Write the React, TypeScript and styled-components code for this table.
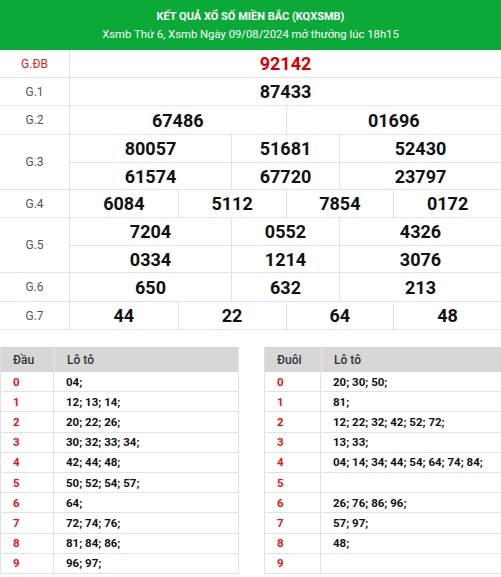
import React from "react";
import styled, { createGlobalStyle } from "styled-components";

const GlobalStyle = createGlobalStyle`
  html, body { margin: 0; padding: 0; background: #fff; }
  body { font-family: Roboto, "Noto Sans", Arial, sans-serif; overflow: hidden; }
  * { box-sizing: border-box; }
`;

const Page = styled.div`
  width: 501px;
`;

const Header = styled.div`
  background: #0aa938;
  height: 50px;
  color: #fff;
  display: flex;
  flex-direction: column;
  align-items: center;
  justify-content: center;
  gap: 3px;
`;

const Title = styled.div`
  font-weight: 700;
  font-size: 11px;
  line-height: 15px;
`;

const SubTitle = styled.div`
  font-size: 11.3px;
  line-height: 15px;
`;

const ResultTable = styled.div`
  display: flex;
  flex-direction: column;
`;

const PrizeRow = styled.div`
  display: grid;
  grid-template-columns: 70px 1fr;
  border-bottom: 1px solid #e2e2e2;
`;

const Label = styled.div<{ $special?: boolean }>`
  display: flex;
  align-items: center;
  justify-content: center;
  border-right: 1px solid #e2e2e2;
  font-size: 12px;
  color: ${(p) => (p.$special ? "#d22" : "#555")};
`;

const Lines = styled.div`
  display: flex;
  flex-direction: column;
`;

const Line = styled.div<{ $cols: string; $h: number }>`
  display: grid;
  grid-template-columns: ${(p) => p.$cols};
  height: ${(p) => p.$h}px;
  & + & { border-top: 1px solid #e2e2e2; }
`;

const Num = styled.div<{ $special?: boolean }>`
  display: flex;
  align-items: center;
  justify-content: center;
  font-weight: 700;
  font-size: 18px;
  color: ${(p) => (p.$special ? "#d80000" : "#111")};
  & + & { border-left: 1px solid #e2e2e2; }
`;

const LotoArea = styled.div`
  display: flex;
  gap: 25px;
  margin-top: 17px;
`;

const LotoTable = styled.div<{ $first: number; $w: string }>`
  width: ${(p) => p.$w};
  flex-shrink: 0;
  display: grid;
  grid-template-columns: ${(p) => p.$first}px 1fr;
  grid-auto-rows: 20.2px;
  grid-template-rows: 25px;
  border-right: 1px solid #e2e2e2;
  border-left: 1px solid #e2e2e2;
  font-size: 11.5px;
`;

const HeadCell = styled.div`
  background: #d7d7d7;
  color: #333;
  font-weight: 500;
  font-size: 12px;
  display: flex;
  align-items: center;
  padding-left: 12px;
  & + & { border-left: 1px solid #e8e8e8; }
`;

const KeyCell = styled.div`
  color: #f01010;
  font-weight: 700;
  display: flex;
  align-items: center;
  padding-left: 12px;
  border-right: 1px solid #e2e2e2;
  border-bottom: 1px solid #e2e2e2;
`;

const ValCell = styled.div`
  color: #111;
  font-weight: 700;
  display: flex;
  align-items: center;
  padding-left: 12px;
  border-bottom: 1px solid #e2e2e2;
`;

const TWO = "1fr 1fr";
const THREE = "161px 108px 1fr";
const FOUR = "repeat(4, 1fr)";

type Prize = { label: string; cols: string; lines: string[][]; special?: boolean; h?: number };

const prizes: Prize[] = [
  { label: "G.ĐB", cols: "1fr", lines: [["92142"]], special: true },
  { label: "G.1", cols: "1fr", lines: [["87433"]] },
  { label: "G.2", cols: TWO, lines: [["67486", "01696"]], h: 28 },
  { label: "G.3", cols: THREE, lines: [["80057", "51681", "52430"], ["61574", "67720", "23797"]] },
  { label: "G.4", cols: FOUR, lines: [["6084", "5112", "7854", "0172"]] },
  { label: "G.5", cols: THREE, lines: [["7204", "0552", "4326"], ["0334", "1214", "3076"]] },
  { label: "G.6", cols: THREE, lines: [["650", "632", "213"]], h: 28 },
  { label: "G.7", cols: FOUR, lines: [["44", "22", "64", "48"]] },
];

const dau = ["04;", "12; 13; 14;", "20; 22; 26;", "30; 32; 33; 34;", "42; 44; 48;", "50; 52; 54; 57;", "64;", "72; 74; 76;", "81; 84; 86;", "96; 97;"];
const duoi = ["20; 30; 50;", "81;", "12; 22; 32; 42; 52; 72;", "13; 33;", "04; 14; 34; 44; 54; 64; 74; 84;", "", "26; 76; 86; 96;", "57; 97;", "48;", ""];

function Loto({ head, first, w, rows }: { head: string; first: number; w: string; rows: string[] }) {
  return (
    <LotoTable $first={first} $w={w}>
      <HeadCell>{head}</HeadCell>
      <HeadCell>Lô tô</HeadCell>
      {rows.map((r, i) => (
        <React.Fragment key={i}>
          <KeyCell>{i}</KeyCell>
          <ValCell>{r}</ValCell>
        </React.Fragment>
      ))}
    </LotoTable>
  );
}

export default function App() {
  return (
    <Page>
      <GlobalStyle />
      <Header>
        <Title>KẾT QUẢ XỔ SỐ MIỀN BẮC (KQXSMB)</Title>
        <SubTitle>Xsmb Thứ 6, Xsmb Ngày 09/08/2024 mở thưởng lúc 18h15</SubTitle>
      </Header>
      <ResultTable>
        {prizes.map((p) => (
          <PrizeRow key={p.label}>
            <Label $special={p.special}>{p.label}</Label>
            <Lines>
              {p.lines.map((line, i) => (
                <Line key={i} $cols={p.cols} $h={p.h ?? 27}>
                  {line.map((n, j) => (
                    <Num key={j} $special={p.special}>{n}</Num>
                  ))}
                </Line>
              ))}
            </Lines>
          </PrizeRow>
        ))}
      </ResultTable>
      <LotoArea>
        <Loto head="Đầu" first={53} w="239px" rows={dau} />
        <Loto head="Đuôi" first={56} w="250px" rows={duoi} />
      </LotoArea>
    </Page>
  );
}
